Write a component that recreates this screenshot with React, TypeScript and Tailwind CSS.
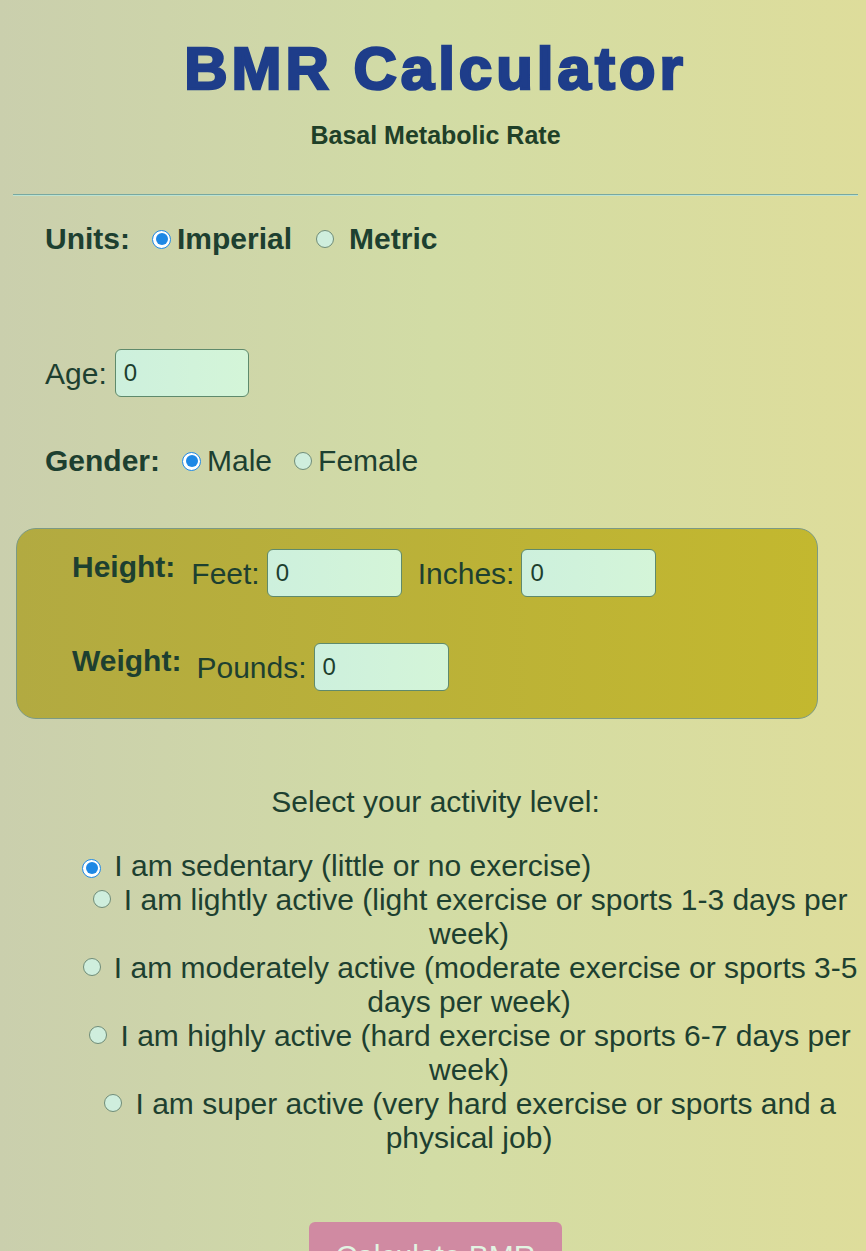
import React, { useState } from 'react'

const activityLevels = [
    'I am sedentary (little or no exercise)',
    'I am lightly active (light exercise or sports 1-3 days per week)',
    'I am moderately active (moderate exercise or sports 3-5 days per week)',
    'I am highly active (hard exercise or sports 6-7 days per week)',
    'I am super active (very hard exercise or sports and a physical job)',
]

function Radio({ checked, className = '' }: { checked: boolean; className?: string }) {
    if (checked) {
        return (
            <span className={`inline-flex items-center justify-center w-[19px] h-[19px] rounded-full border-[1.5px] border-[#1e88e5] bg-white shrink-0 ${className}`}>
                <span className="w-[12px] h-[12px] rounded-full bg-[#1e88e5]" />
            </span>
        )
    }
    return (
        <span className={`inline-block w-[18px] h-[18px] rounded-full border border-[#6f8c78] bg-[#cfeedd] shrink-0 ${className}`} />
    )
}

function NumberBox({ className = '' }: { className?: string }) {
    return (
        <input
            type="text"
            readOnly
            value="0"
            className={`w-[135px] h-[48px] rounded-[6px] border border-[#5f8a6c] bg-[linear-gradient(to_right,#cdf0dd,#d4f5d8)] pl-[8px] text-[24px] text-[#1d3f2e] outline-none ${className}`}
        />
    )
}

export default function App() {
    const [units, setUnits] = useState<'imperial' | 'metric'>('imperial')
    const [gender, setGender] = useState<'male' | 'female'>('male')
    const [activity, setActivity] = useState(0)

    return (
        <div className="min-h-screen overflow-hidden bg-[linear-gradient(to_right,#cacfad,#d2dca5_50%,#dedd9b)] pl-[13px] pr-[8px] font-['Liberation_Sans',Arial,sans-serif] text-[#1d4030]">
            {/* Header */}
            <h1 className="mt-[34px] text-center text-[60px] leading-[69px] font-bold tracking-[4px] text-[#1e3d8a] [-webkit-text-stroke:2.5px_#1e3d8a]">
                BMR Calculator
            </h1>
            <p className="mt-[18px] text-center text-[25px] leading-[29px] font-bold text-[#1f4028]">
                Basal Metabolic Rate
            </p>

            <div className="mt-[44px] border-t border-b border-t-[#78a8a0] border-b-[#bde3d2]" />

            {/* Units */}
            <div className="mt-[26px] pl-[32px] flex items-center text-[30px] leading-[34px] font-bold">
                <span>Units:</span>
                <button onClick={() => setUnits('imperial')} className="ml-[22px] flex items-center">
                    <Radio checked={units === 'imperial'} />
                    <span className="ml-[6px]">Imperial</span>
                </button>
                <button onClick={() => setUnits('metric')} className="ml-[24px] flex items-center">
                    <Radio checked={units === 'metric'} />
                    <span className="ml-[15px]">Metric</span>
                </button>
            </div>

            {/* Age */}
            <div className="mt-[93px] pl-[32px] flex items-center text-[30px] leading-[34px]">
                <span className="pt-[1px]">Age:</span>
                <NumberBox className="ml-[8px] !w-[134px]" />
            </div>

            {/* Gender */}
            <div className="mt-[47px] pl-[32px] flex items-center text-[30px] leading-[34px]">
                <span className="font-bold">Gender:</span>
                <button onClick={() => setGender('male')} className="ml-[22px] flex items-center">
                    <Radio checked={gender === 'male'} />
                    <span className="ml-[6px]">Male</span>
                </button>
                <button onClick={() => setGender('female')} className="ml-[22px] flex items-center">
                    <Radio checked={gender === 'female'} />
                    <span className="ml-[6px]">Female</span>
                </button>
            </div>

            {/* Height / Weight */}
            <div className="mt-[50px] ml-[3px] mr-[40px] rounded-[20px] border border-[#7c9a84] bg-[linear-gradient(to_right,#b2aa41,#c3b82f)] pl-[55px] pt-[20px] pb-[27px] text-[30px] leading-[30px]">
                <div className="flex items-start">
                    <span className="pt-[3px] font-bold">Height:</span>
                    <div className="ml-[16px] flex items-center">
                        <span className="pt-[2px]">Feet:</span>
                        <NumberBox className="ml-[7px]" />
                        <span className="ml-[16px] pt-[2px]">Inches:</span>
                        <NumberBox className="ml-[7px]" />
                    </div>
                </div>
                <div className="mt-[46px] flex items-start">
                    <span className="pt-[3px] font-bold">Weight:</span>
                    <div className="ml-[15px] flex items-center">
                        <span className="pt-[2px]">Pounds:</span>
                        <NumberBox className="ml-[7px]" />
                    </div>
                </div>
            </div>

            {/* Activity level */}
            <p className="mt-[66px] text-center text-[30px] leading-[34px]">Select your activity level:</p>

            <div className="mt-[30px] ml-[67px] text-[30px] leading-[34px]">
                {activityLevels.map((label, i) => (
                    <div
                        key={label}
                        onClick={() => setActivity(i)}
                        className={i === 0 ? 'text-left cursor-pointer' : 'text-center cursor-pointer'}
                    >
                        <Radio checked={activity === i} className="ml-[2px] mr-[5px] align-[2px]" /> {label}
                    </div>
                ))}
            </div>

            {/* Submit */}
            <div className="mt-[67px] flex justify-center">
                <button className="w-[253px] rounded-[6px] bg-[#d08aa2] pt-[17px] pb-[17px] text-[30px] leading-[34px] text-[#e2f4e2]">
                    Calculate BMR
                </button>
            </div>
        </div>
    )
}
